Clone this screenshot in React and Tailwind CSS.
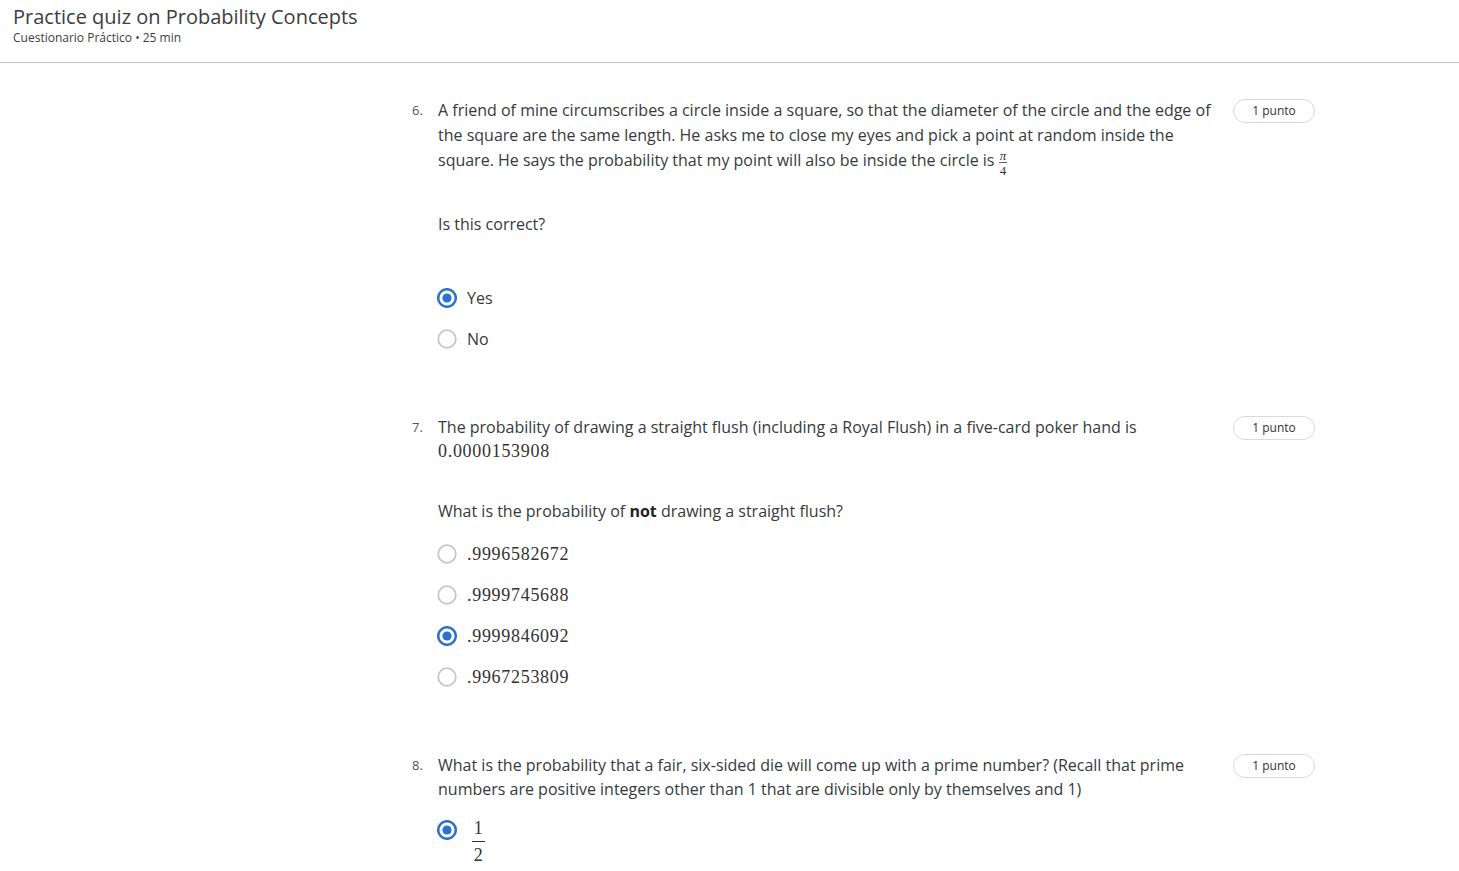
import React from "react";

const sans = { fontFamily: '"Open Sans", "Liberation Sans", sans-serif' };

// Radio drawn as svg so ring + dot line up exactly
const Radio = ({ checked }) => (
  <svg width="20" height="20" viewBox="0 0 20 20" className="shrink-0">
    <circle
      cx="10"
      cy="10"
      r="8.8"
      fill="white"
      stroke={checked ? "#2a72cc" : "#c6c6c6"}
      strokeWidth={checked ? 2.5 : 1.8}
    />
    {checked && <circle cx="10" cy="10" r="4.6" fill="#2a72cc" />}
  </svg>
);

const Math = ({ children, className = "" }) => (
  <span
    className={`text-[18px] tracking-[0.7px] text-[#333] ${className}`}
    style={{ fontFamily: '"Liberation Serif", "DejaVu Serif", serif' }}
  >
    {children}
  </span>
);

const Badge = () => (
  <div className="shrink-0 ml-[12px] mt-[1px] w-[82px] h-[24px] rounded-full border border-[#d9d9d9] flex items-center justify-center text-[12px] text-[#333]">
    1 punto
  </div>
);

const Option = ({ checked, children }) => (
  <div className="flex items-center h-[41px] gap-[10px] -ml-[1px]">
    <Radio checked={checked} />
    {children}
  </div>
);

const Question = ({ num, children, className = "" }) => (
  <div className={`flex ${className}`}>
    <div className="w-[26px] shrink-0 text-[13px] text-[#555] leading-[24px]">
      {num}.
    </div>
    <div className="w-[783px] shrink-0 text-[16px] leading-[24px] text-[#373a3c]">
      {children}
    </div>
    <Badge />
  </div>
);

export default function App() {
  return (
    <div className="min-h-screen bg-white" style={sans}>
      {/* Header */}
      <div className="h-[63px] border-b border-[#c4c4c4] pl-[13px] pt-[4px]">
        <h1 className="text-[20px] leading-[26px] text-[#3d3d3d]">
          Practice quiz on Probability Concepts
        </h1>
        <p className="text-[12px] leading-[16px] text-[#3d3d3d]">
          Cuestionario Práctico • 25 min
        </p>
      </div>

      <div className="pl-[412px] pt-[35px]">
        {/* Q6 */}
        <Question num={6}>
          <p className="leading-[25px]">
            A friend of mine circumscribes a circle inside a square, so that the
            diameter of the circle and the edge of the square are the same
            length. He asks me to close my eyes and pick a point at random inside
            the square. He says the probability that my point will also be
            inside the circle is{" "}
            <span
              className="inline-flex flex-col items-center align-middle text-[13px] text-[#333] relative top-[2px]"
              style={{ fontFamily: '"Liberation Serif", serif' }}
            >
              <span className="italic px-[1px] leading-[12px]">π</span>
              <span className="w-full border-t border-[#666]" />
              <span className="leading-[13px] mt-[1px]">4</span>
            </span>
          </p>
          <p className="mt-[37px]">Is this correct?</p>
          <div className="mt-[41px]">
            <Option checked>
              <span>Yes</span>
            </Option>
            <Option>
              <span>No</span>
            </Option>
          </div>
        </Question>

        {/* Q7 */}
        <Question num={7} className="mt-[56px]">
          <p>
            The probability of drawing a straight flush (including a Royal
            Flush) in a five-card poker hand is
          </p>
          <Math className="block leading-[24px]">0.0000153908</Math>
          <p className="mt-[36px]">
            What is the probability of <b className="font-bold text-[#222]">not</b>{" "}
            drawing a straight flush?
          </p>
          <div className="mt-[10px]">
            <Option>
              <Math>.9996582672</Math>
            </Option>
            <Option>
              <Math>.9999745688</Math>
            </Option>
            <Option checked>
              <Math>.9999846092</Math>
            </Option>
            <Option>
              <Math>.9967253809</Math>
            </Option>
          </div>
        </Question>

        {/* Q8 */}
        <Question num={8} className="mt-[56px]">
          <p>
            What is the probability that a fair, six-sided die will come up with
            a prime number? (Recall that prime numbers are positive integers
            other than 1 that are divisible only by themselves and 1)
          </p>
          <div className="flex items-start gap-[10px] mt-[19px] -ml-[1px]">
            <Radio checked />
            <Math className="inline-flex flex-col items-center leading-none ml-[5px] mt-[-1px]">
              <span>1</span>
              <span className="w-[13px] border-t border-[#333] mt-[4px]" />
              <span className="mt-[4px]">2</span>
            </Math>
          </div>
        </Question>
      </div>
    </div>
  );
}
